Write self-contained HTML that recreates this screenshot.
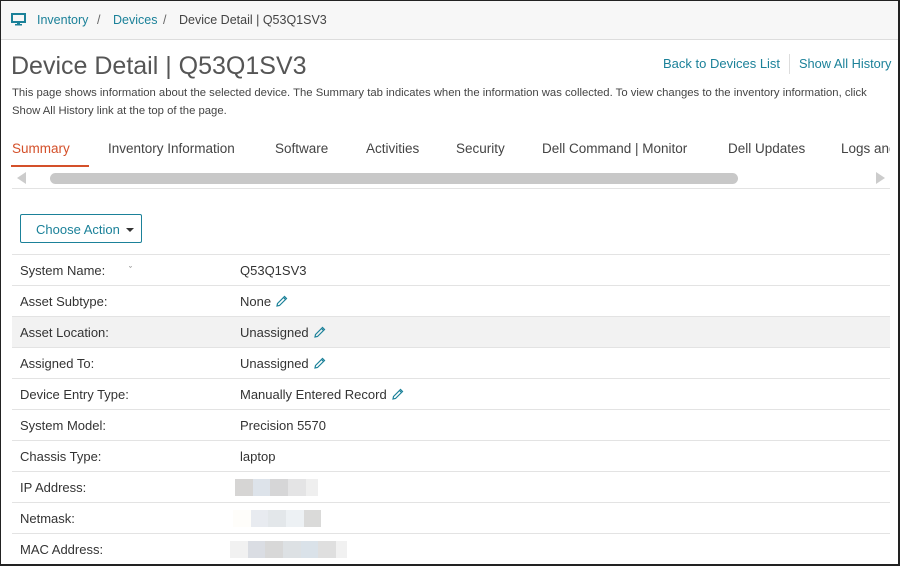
<!DOCTYPE html><html><head><meta charset="utf-8"><style>
*{margin:0;padding:0;box-sizing:border-box}
body{width:900px;height:566px;overflow:hidden;background:#fff;font-family:"Liberation Sans",sans-serif;color:#333;position:relative}
.frame{position:absolute;inset:0;border:1px solid #222;border-right:2px solid #222;border-bottom:2px solid #222;pointer-events:none;z-index:9}
.a{position:absolute;white-space:nowrap}
.crumb{position:absolute;left:1px;top:1px;right:2px;height:39px;background:#f7f7f7;border-bottom:1px solid #ddd}
.link{color:#1b8199}
.row{position:absolute;left:12px;width:878px;height:31px;border-top:1px solid #e3e3e3;font-size:13px}
.row .l{position:absolute;left:8px;top:8px}
.row .v{position:absolute;left:228px;top:8px}
.pen{display:inline-block;vertical-align:-2px;margin-left:4px}
.blk{position:absolute;top:7px;height:17px;display:flex}
.blk span{display:block;height:17px}
</style></head><body>
<div class="crumb"></div>
<svg class="a" style="left:11px;top:13px" width="15" height="13" viewBox="0 0 15 13"><rect x="1" y="1" width="13" height="8" fill="none" stroke="#1b8199" stroke-width="2"/><rect x="6" y="9" width="3" height="2" fill="#1b8199"/><rect x="4" y="11" width="7" height="1.5" fill="#1b8199"/></svg>
<div class="a link" style="left:37px;top:13px;font-size:12.5px">Inventory</div>
<div class="a" style="left:97px;top:13px;font-size:12.5px;color:#666">/</div>
<div class="a link" style="left:113px;top:13px;font-size:12.5px">Devices</div>
<div class="a" style="left:163px;top:13px;font-size:12.5px;color:#666">/</div>
<div class="a" style="left:179px;top:13px;font-size:12.5px;color:#444">Device Detail | Q53Q1SV3</div>
<div class="a" style="left:11px;top:52px;font-size:25px;color:#555">Device Detail | Q53Q1SV3</div>
<div class="a link" style="left:663px;top:56px;font-size:13px">Back to Devices List</div>
<div class="a" style="left:789px;top:54px;width:1px;height:20px;background:#ddd"></div>
<div class="a link" style="left:799px;top:56px;font-size:12.8px">Show All History</div>
<div class="a" style="left:12px;top:84px;font-size:11.3px;line-height:18px;color:#444">This page shows information about the selected device. The Summary tab indicates when the information was collected. To view changes to the inventory information, click<br>Show All History link at the top of the page.</div>
<div class="a" style="top:141px;left:12px;font-size:13.5px;color:#d4502a">Summary</div>
<div class="a" style="top:165px;left:11px;width:78px;height:2px;background:#d4502a"></div>
<div class="a" style="top:141px;left:108px;font-size:13.5px;color:#444">Inventory Information</div>
<div class="a" style="top:141px;left:275px;font-size:13.5px;color:#444">Software</div>
<div class="a" style="top:141px;left:366px;font-size:13.5px;color:#444">Activities</div>
<div class="a" style="top:141px;left:456px;font-size:13.5px;color:#444">Security</div>
<div class="a" style="top:141px;left:542px;font-size:13.5px;color:#444">Dell Command | Monitor</div>
<div class="a" style="top:141px;left:728px;font-size:13.5px;color:#444">Dell Updates</div>
<div class="a" style="top:141px;left:841px;font-size:13.5px;color:#444;width:49px;overflow:hidden">Logs and</div>
<div class="a" style="top:172px;left:17px;width:0;height:0;border-top:6px solid transparent;border-bottom:6px solid transparent;border-right:9px solid #ccc"></div>
<div class="a" style="top:173px;left:50px;width:688px;height:11px;background:#c8c8c8;border-radius:6px"></div>
<div class="a" style="top:172px;left:876px;width:0;height:0;border-top:6px solid transparent;border-bottom:6px solid transparent;border-left:9px solid #ccc"></div>
<div class="a" style="top:188px;left:12px;width:878px;height:1px;background:#e3e3e3"></div>
<div class="a" style="top:214px;left:20px;width:122px;height:29px;border:1px solid #1b8199;border-radius:2px;color:#1b8199;font-size:13px;padding:7px 0 0 15px">Choose Action <span style="display:inline-block;width:0;height:0;border-left:4px solid transparent;border-right:4px solid transparent;border-top:4px solid #333;vertical-align:2px;margin-left:3px"></span></div>
<div class="row" style="top:254px"><span class="l">System Name:</span><span class="a" style="left:117px;top:10px;font-size:9px;color:#666">ˇ</span><span class="v">Q53Q1SV3</span></div>
<div class="row" style="top:285px"><span class="l">Asset Subtype:</span><span class="v">None<svg class="pen" width="13" height="13" viewBox="0 0 13 13"><path d="M2 11 L2.5 8.5 L9.5 1.5 L11.5 3.5 L4.5 10.5 Z M8.5 2.5 L10.5 4.5" fill="none" stroke="#1b8199" stroke-width="1.2"/></svg></span></div>
<div class="row" style="top:316px;background:#f2f2f2"><span class="l">Asset Location:</span><span class="v">Unassigned<svg class="pen" width="13" height="13" viewBox="0 0 13 13"><path d="M2 11 L2.5 8.5 L9.5 1.5 L11.5 3.5 L4.5 10.5 Z M8.5 2.5 L10.5 4.5" fill="none" stroke="#1b8199" stroke-width="1.2"/></svg></span></div>
<div class="row" style="top:347px"><span class="l">Assigned To:</span><span class="v">Unassigned<svg class="pen" width="13" height="13" viewBox="0 0 13 13"><path d="M2 11 L2.5 8.5 L9.5 1.5 L11.5 3.5 L4.5 10.5 Z M8.5 2.5 L10.5 4.5" fill="none" stroke="#1b8199" stroke-width="1.2"/></svg></span></div>
<div class="row" style="top:378px"><span class="l">Device Entry Type:</span><span class="v">Manually Entered Record<svg class="pen" width="13" height="13" viewBox="0 0 13 13"><path d="M2 11 L2.5 8.5 L9.5 1.5 L11.5 3.5 L4.5 10.5 Z M8.5 2.5 L10.5 4.5" fill="none" stroke="#1b8199" stroke-width="1.2"/></svg></span></div>
<div class="row" style="top:409px"><span class="l">System Model:</span><span class="v">Precision 5570</span></div>
<div class="row" style="top:440px"><span class="l">Chassis Type:</span><span class="v">laptop</span></div>
<div class="row" style="top:471px"><span class="l">IP Address:</span><div class="blk" style="left:223px"><span style="width:18px;background:#d6d5d4"></span><span style="width:17px;background:#dde3ea"></span><span style="width:18px;background:#d6d6d7"></span><span style="width:18px;background:#e4e4e5"></span><span style="width:12px;background:#efefef"></span></div></div>
<div class="row" style="top:502px"><span class="l">Netmask:</span><div class="blk" style="left:221px"><span style="width:18px;background:#fefdfa"></span><span style="width:17px;background:#e8ebf0"></span><span style="width:18px;background:#e3e7ea"></span><span style="width:18px;background:#edf1f4"></span><span style="width:17px;background:#dadad9"></span></div></div>
<div class="row" style="top:533px"><span class="l">MAC Address:</span><div class="blk" style="left:218px"><span style="width:18px;background:#f1f1f1"></span><span style="width:17px;background:#dadde3"></span><span style="width:18px;background:#d8d8d8"></span><span style="width:18px;background:#dde1e4"></span><span style="width:17px;background:#dae2e9"></span><span style="width:18px;background:#dfdfdf"></span><span style="width:11px;background:#f1f1f1"></span></div></div>
<div class="frame"></div>
</body></html>
